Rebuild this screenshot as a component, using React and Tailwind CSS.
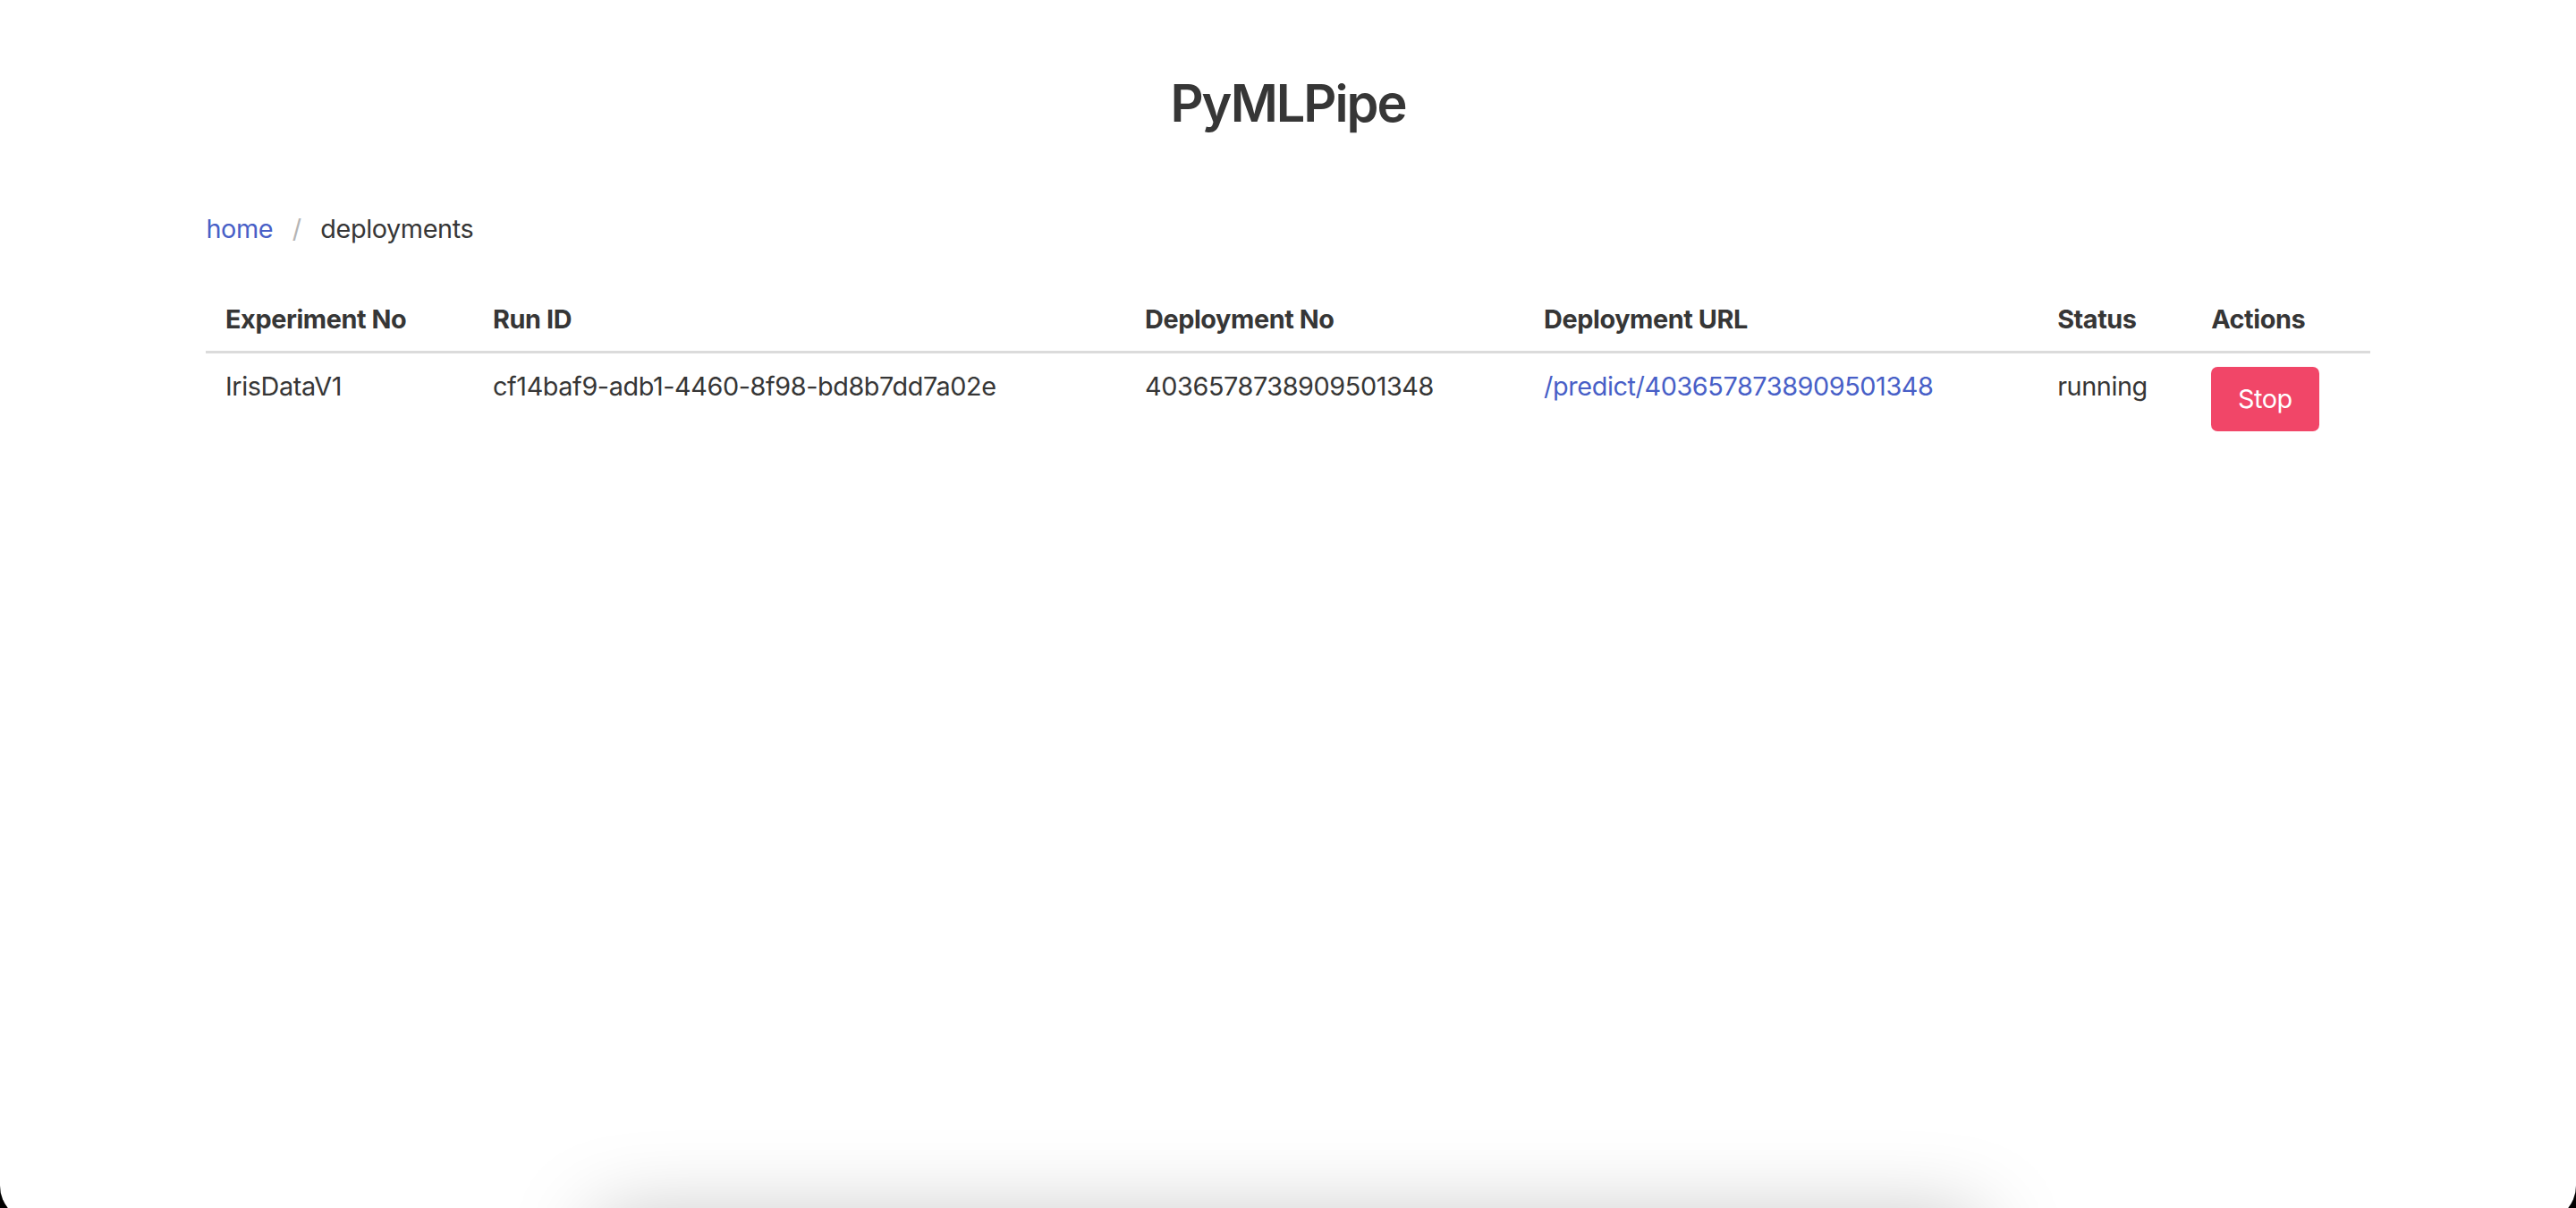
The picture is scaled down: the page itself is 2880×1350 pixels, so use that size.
import React from "react";

const columns = [
  { label: "Experiment No", width: "w-[299px]" },
  { label: "Run ID", width: "w-[729px]" },
  { label: "Deployment No", width: "w-[446px]" },
  { label: "Deployment URL", width: "w-[574px]" },
  { label: "Status", width: "w-[172px]" },
  { label: "Actions", width: "w-[199px]" },
];

const deployments = [
  {
    experiment: "IrisDataV1",
    runId: "cf14baf9-adb1-4460-8f98-bd8b7dd7a02e",
    deploymentNo: "4036578738909501348",
    status: "running",
  },
];

function Breadcrumb() {
  return (
    <nav className="flex items-center h-[43.2px] leading-[43.2px]">
      <a href="#" className="pr-[21.6px] text-[#485fc7]">
        home
      </a>
      <span className="text-[#b5b5b5]">/</span>
      <span className="pl-[21.6px] text-[#363636]">deployments</span>
    </nav>
  );
}

function DeploymentsTable() {
  return (
    <table className="table-fixed w-full border-collapse text-[#363636]">
      <colgroup>
        {columns.map((c) => (
          <col key={c.label} className={c.width} />
        ))}
      </colgroup>
      <thead>
        <tr>
          {columns.map((c) => (
            <th
              key={c.label}
              className="text-left font-bold px-[21.6px] py-[14.4px] leading-[43.2px] border-b-[3.6px] border-[#dbdbdb]"
            >
              {c.label}
            </th>
          ))}
        </tr>
      </thead>
      <tbody>
        {deployments.map((d) => (
          <tr key={d.runId}>
            <td className="align-top px-[21.6px] py-[14.4px] leading-[43.2px]">{d.experiment}</td>
            <td className="align-top px-[21.6px] py-[14.4px] leading-[43.2px]">{d.runId}</td>
            <td className="align-top px-[21.6px] py-[14.4px] leading-[43.2px]">{d.deploymentNo}</td>
            <td className="align-top px-[21.6px] py-[14.4px] leading-[43.2px]">
              <a href="#" className="text-[#485fc7]">
                /predict/{d.deploymentNo}
              </a>
            </td>
            <td className="align-top px-[21.6px] py-[14.4px] leading-[43.2px]">{d.status}</td>
            <td className="align-top px-[21.6px] py-[14.4px]">
              <button className="h-[72px] px-[28.8px] rounded-[7.2px] bg-[#f14668] text-white leading-[43.2px] border-[1.8px] border-transparent">
                Stop
              </button>
            </td>
          </tr>
        ))}
      </tbody>
    </table>
  );
}

export default function App() {
  return (
    <div className="relative h-[1350px] w-full overflow-hidden bg-black">
      <div
        className="relative h-[1365px] w-full bg-white rounded-b-[40px] overflow-hidden text-[28.8px] tracking-[-0.4px] text-[#4a4a4a]"
        style={{ fontFamily: "Inter, 'Noto Sans', sans-serif" }}
      >
        <div className="mx-auto w-[2419.2px] pt-[82.6px]">
          <h1 className="text-center text-[57.6px] leading-[64.8px] tracking-[-2px] font-semibold text-[#363636]">
            PyMLPipe
          </h1>
          <div className="mt-[86.6px] mb-[43.2px]">
            <Breadcrumb />
          </div>
          <DeploymentsTable />
        </div>
        {/* soft shadow creeping in at the bottom edge */}
        <div className="absolute left-[660px] right-[660px] top-[1360px] h-[70px] rounded-full bg-black/25 blur-[45px]" />
      </div>
    </div>
  );
}
